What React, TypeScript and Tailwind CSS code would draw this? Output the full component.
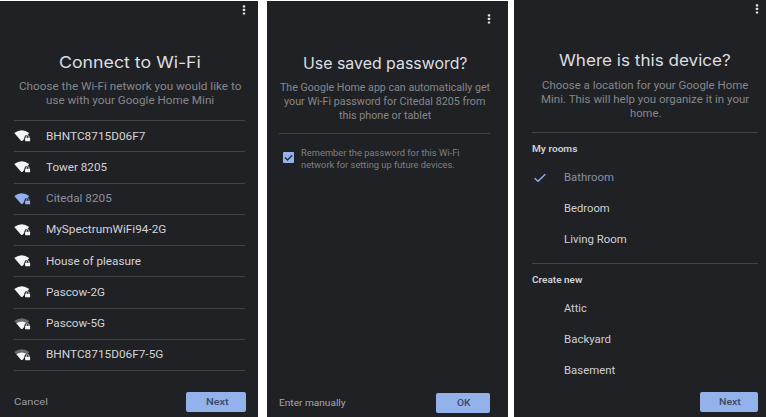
import { useLayoutEffect, useRef, useState } from 'react';

type FitProps = { children: string; className?: string };

/* One line of text, stretched horizontally to fill the width of its box. */
function Fit({ children, className = '' }: FitProps) {
  const box = useRef<HTMLSpanElement>(null);
  const ink = useRef<HTMLSpanElement>(null);
  const [scale, setScale] = useState(1);
  useLayoutEffect(() => {
    if (box.current && ink.current) {
      setScale(box.current.clientWidth / ink.current.offsetWidth);
    }
  }, [children]);
  return (
    <span ref={box} className={`block shrink-0 whitespace-nowrap ${className}`}>
      <span ref={ink} className="inline-block origin-left" style={{ transform: `scaleX(${scale})` }}>
        {children}
      </span>
    </span>
  );
}

function Dots({ className = '' }: { className?: string }) {
  return (
    <svg width="4" height="10" viewBox="0 0 4 10" fill="#e2e3e6" className={`block shrink-0 self-end ${className}`}>
      <rect x="0.8" y="0.2" width="2.4" height="2.2" rx="0.5" />
      <rect x="0.8" y="3.8" width="2.4" height="2.2" rx="0.5" />
      <rect x="0.8" y="7.4" width="2.4" height="2.2" rx="0.5" />
    </svg>
  );
}

function WifiLock({ color, weak }: { color: string; weak?: boolean }) {
  return (
    <svg width="17" height="12" viewBox="0 0 17 12" className="block shrink-0">
      <path d="M0.3 3Q7.7 -2.4 15.2 3L8.6 10.8Q7.8 11.4 7 10.8Z" fill={color} opacity={weak ? 0.35 : 1} />
      {weak && <path d="M2.4 5.2Q7.7 1.8 13.1 5.2L8.6 10.8Q7.8 11.4 7 10.8Z" fill={color} />}
      <path d="M10.4 12V7.4Q10.6 5 13 5H17V12Z" fill="#202124" />
      <rect x="11.1" y="7.8" width="5" height="3.5" rx="0.6" fill={color} />
      <path d="M12.2 8V6.8a1.4 1.2 0 0 1 2.8 0V8" fill="none" stroke={color} strokeWidth="0.8" />
    </svg>
  );
}

const networks = [
  { name: 'BHNTC8715D06F7', width: 'w-[99px]' },
  { name: 'Tower 8205', width: 'w-[61px]' },
  { name: 'Citedal 8205', width: 'w-[66px]', active: true },
  { name: 'MySpectrumWiFi94-2G', width: 'w-[120px]' },
  { name: 'House of pleasure', width: 'w-[95px]' },
  { name: 'Pascow-2G', width: 'w-[59px]' },
  { name: 'Pascow-5G', width: 'w-[59px]', weak: true },
  { name: 'BHNTC8715D06F7-5G', width: 'w-[117px]', weak: true },
];

function ConnectScreen() {
  return (
    <section className="mt-px flex h-[416px] w-[258px] flex-col bg-[#202124] pl-3.5 pr-[13px]">
      <Dots className="-mr-px mt-[4px]" />
      <div className="mt-[35px] flex flex-col items-center">
        <Fit className="w-[142px] font-['Inter'] text-[16px] leading-[24px] text-[#dcdee2]">Connect to Wi-Fi</Fit>
        <div className="mt-[6px] flex flex-col items-center text-[10.5px] leading-[14px] text-[#85878c]">
          <Fit className="w-[222px]">Choose the Wi-Fi network you would like to</Fit>
          <Fit className="w-[168px]">use with your Google Home Mini</Fit>
        </div>
      </div>
      <ul className="mt-[12px] flex h-[251px] flex-col border-t border-[#424347]">
        {networks.map((n) => (
          <li key={n.name} className="flex flex-1 items-center gap-[15px] border-b border-[#424347]">
            <WifiLock color={n.active ? '#8fb1f0' : '#f4f5f7'} weak={n.weak} />
            <Fit
              className={`${n.width} pt-px text-[10.5px] leading-[14px] ${n.active ? 'text-[#8790a5]' : 'text-[#d2d4d9]'}`}
            >
              {n.name}
            </Fit>
          </li>
        ))}
      </ul>
      <footer className="mr-[-0.5px] mt-[21px] flex items-center justify-between text-[9.5px]">
        <Fit className="w-[34px] pt-px text-[#9a9ca2]">Cancel</Fit>
        <button className="flex h-5 w-[60px] items-center justify-center rounded-[2px] bg-[#93b1ea] font-medium text-[#3b4965]">
          <Fit className="w-[23px]">Next</Fit>
        </button>
      </footer>
    </section>
  );
}

function PasswordScreen() {
  return (
    <section className="mt-px flex h-[416px] w-[241px] flex-col bg-[#202124] pl-3 pr-[18px]">
      <Dots className="-mr-px mt-[13px]" />
      <div className="mt-[28px] flex flex-col items-center">
        <Fit className="w-[164px] font-['Inter'] text-[15.5px] leading-[24px] text-[#dcdee2]">Use saved password?</Fit>
        <div className="mt-[5px] flex flex-col items-center text-[10.5px] leading-[14px] text-[#85878c]">
          <Fit className="w-[210px]">The Google Home app can automatically get</Fit>
          <Fit className="w-[201px]">your Wi-Fi password for Citedal 8205 from</Fit>
          <Fit className="w-[92px]">this phone or tablet</Fit>
        </div>
      </div>
      <div className="mt-[10px] flex items-start gap-[7px] border-t border-[#424347] pl-[4px] pt-[14px]">
        <svg width="11" height="11" viewBox="0 0 11 11" className="mt-[4px] shrink-0">
          <rect width="11" height="11" rx="0.8" fill="#93b1ea" />
          <path d="M2 5.5L4.5 8L9.2 3.2" fill="none" stroke="#202a40" strokeWidth="1.4" />
        </svg>
        <div className="text-[9px] leading-[11.5px] text-[#7e8085]">
          <Fit className="w-[159px]">Remember the password for this Wi-Fi</Fit>
          <Fit className="w-[154px]">network for setting up future devices.</Fit>
        </div>
      </div>
      <footer className="mb-[4px] mt-auto flex items-center justify-between text-[9.5px]">
        <Fit className="w-[67px] text-[#a6a8ae]">Enter manually</Fit>
        <button className="flex h-5 w-[54px] items-center justify-center rounded-[2px] bg-[#93b1ea] font-medium text-[#3b4965]">
          <Fit className="w-[14px]">OK</Fit>
        </button>
      </footer>
    </section>
  );
}

const myRooms = [
  { name: 'Bathroom', width: 'w-[50px]', active: true },
  { name: 'Bedroom', width: 'w-[46px]' },
  { name: 'Living Room', width: 'w-[63px]' },
];

const newRooms = [
  { name: 'Attic', width: 'w-[23px]' },
  { name: 'Backyard', width: 'w-[47px]' },
  { name: 'Basement', width: 'w-[51px]' },
];

type Room = { name: string; width: string; active?: boolean };

function RoomList({ rooms }: { rooms: Room[] }) {
  return (
    <ul className="mt-[8px] text-[10.5px] text-[#ced0d5]">
      {rooms.map((r) => (
        <li key={r.name} className="flex h-[30.8px] items-center">
          <div className="w-[31.5px] pl-[2px]">
            {r.active && (
              <svg width="12" height="10" viewBox="0 0 12 10" fill="none" stroke="#8fb1f0" strokeWidth="1.4">
                <path d="M0.6 5.2L4 8.2L11.3 1.2" />
              </svg>
            )}
          </div>
          <Fit className={`${r.width} ${r.active ? 'text-[#8790a5]' : ''}`}>{r.name}</Fit>
        </li>
      ))}
    </ul>
  );
}

function LocationScreen() {
  return (
    <section className="flex h-[417px] w-[252px] flex-col bg-[#202124] pl-[18px] pr-[8px]">
      <Dots className="-mr-px mt-[4px]" />
      <div className="mt-[35px] flex flex-col items-center">
        <Fit className="w-[172px] font-['Inter'] text-[15.5px] leading-[24px] text-[#dcdee2]">Where is this device?</Fit>
        <div className="mt-[6px] flex flex-col items-center text-[10.5px] leading-[14px] text-[#85878c]">
          <Fit className="w-[206px]">Choose a location for your Google Home</Fit>
          <Fit className="w-[208px]">Mini. This will help you organize it in your</Fit>
          <Fit className="w-[31px]">home.</Fit>
        </div>
      </div>
      <div className="mt-[11px] h-[131px] border-t border-[#424347] pt-[9.5px]">
        <Fit className="w-[45px] text-[9px] font-semibold leading-[12px] text-[#cfd1d5]">My rooms</Fit>
        <RoomList rooms={myRooms} />
      </div>
      <div className="h-[129px] border-t border-[#424347] pt-[9.5px]">
        <Fit className="w-[50px] text-[9px] font-semibold leading-[12px] text-[#cfd1d5]">Create new</Fit>
        <RoomList rooms={newRooms} />
      </div>
      <footer className="flex justify-end">
        <button className="flex h-5 w-[58px] items-center justify-center rounded-[2px] bg-[#93b1ea] text-[9.5px] font-medium text-[#3b4965]">
          <Fit className="w-[22px]">Next</Fit>
        </button>
      </footer>
    </section>
  );
}

export default function App() {
  return (
    <main className="flex h-[417px] w-[766px] overflow-hidden bg-white font-['Roboto',sans-serif]">
      <ConnectScreen />
      <div className="w-[9px]" />
      <PasswordScreen />
      <div className="w-[6px]" />
      <LocationScreen />
    </main>
  );
}
